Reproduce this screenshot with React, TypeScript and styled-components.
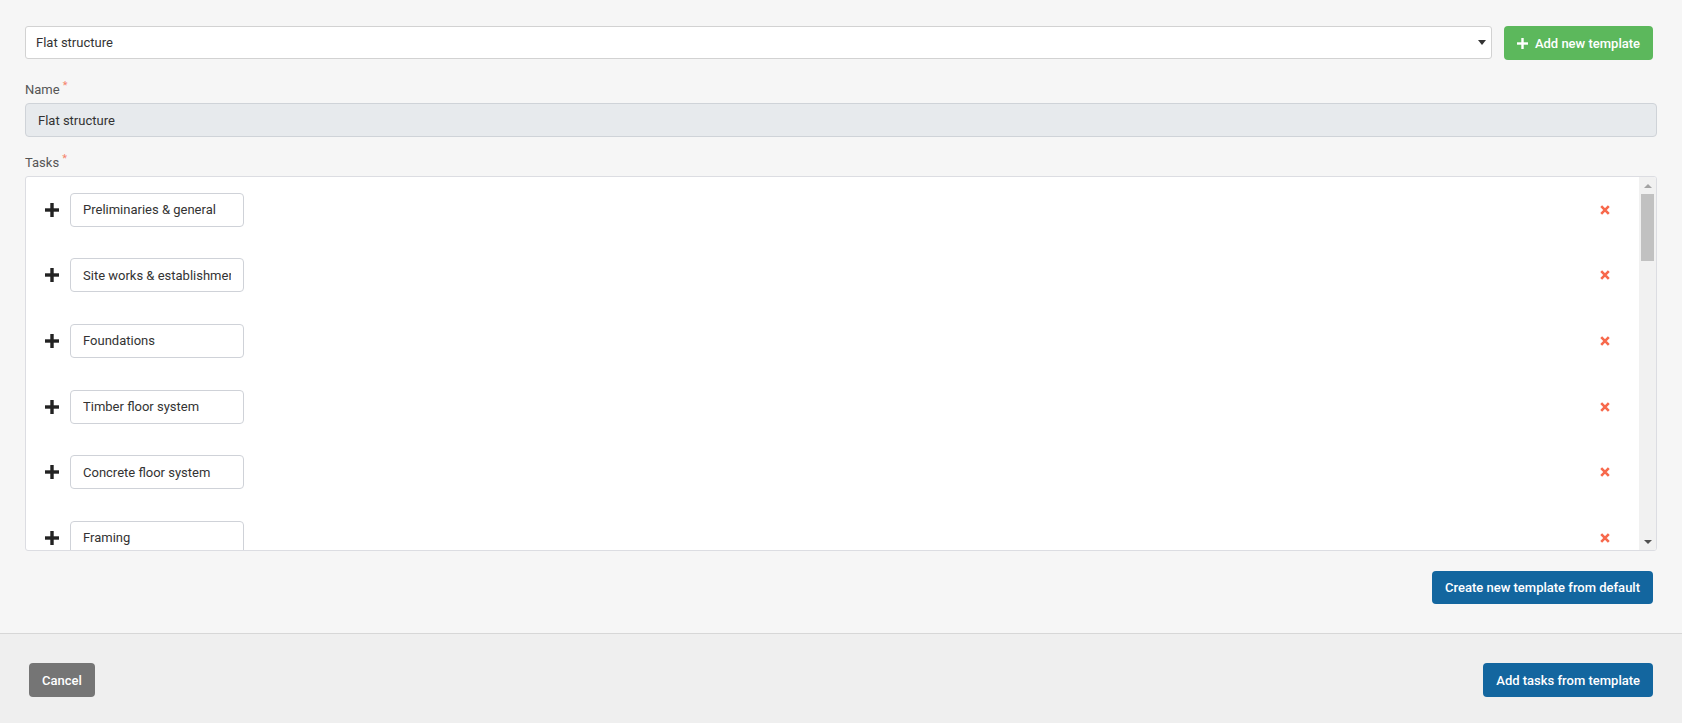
import React from "react";
import styled, { createGlobalStyle } from "styled-components";

const GlobalStyle = createGlobalStyle`
  html, body {
    margin: 0;
    padding: 0;
    background: #f6f6f6;
  }
  body {
    font-family: Roboto, "Liberation Sans", Arial, sans-serif;
    font-size: 13px;
    color: #333;
  }
  * { box-sizing: border-box; }
`;

const Page = styled.div`
  display: flex;
  flex-direction: column;
  height: 723px;
  background: #f6f6f6;
`;

const Main = styled.main`
  flex: 1;
  display: flex;
  flex-direction: column;
  padding: 26px 25px 29px;
`;

const TemplateRow = styled.div`
  display: flex;
  align-items: flex-start;
  gap: 12px;
  padding-right: 4px;
`;

const SelectWrap = styled.div`
  position: relative;
  flex: 1;
`;

const Select = styled.select`
  appearance: none;
  -webkit-appearance: none;
  display: block;
  width: 100%;
  height: 33px;
  padding: 0 30px 0 10px;
  border: 1px solid #d2d2d2;
  border-radius: 3px;
  background: #fff;
  font: inherit;
  color: #333;
  outline: none;
`;

const Caret = styled.svg`
  position: absolute;
  right: 6px;
  top: 14px;
  pointer-events: none;
`;

const Button = styled.button<{ $variant: "green" | "blue" | "grey"; $h?: number }>`
  display: inline-flex;
  align-items: center;
  gap: 7px;
  height: ${(p) => p.$h ?? 34}px;
  padding: 0 13px;
  border: none;
  border-radius: 4px;
  font-family: Roboto, "Liberation Sans", Arial, sans-serif;
  font-size: 13px;
  font-weight: 500;
  color: #fff;
  white-space: nowrap;
  cursor: pointer;
  background: ${(p) =>
    p.$variant === "green" ? "#5cb85c" : p.$variant === "blue" ? "#13669f" : "#757575"};
`;

const Label = styled.label<{ $gap: number }>`
  display: block;
  margin-top: ${(p) => p.$gap}px;
  margin-bottom: 6px;
  line-height: 15px;
  color: #555;
`;

const Required = styled.span`
  display: inline-block;
  margin-left: 3px;
  vertical-align: top;
  font-size: 11px;
  line-height: 1;
  color: #f5846c;
  margin-top: -2px;
`;

const NameInput = styled.input`
  display: block;
  width: 100%;
  height: 34px;
  padding: 0 12px;
  border: 1px solid #cfd3d8;
  border-radius: 4px;
  background: #e7eaed;
  font: inherit;
  color: #333;
  outline: none;
`;

const TaskBox = styled.div`
  display: flex;
  height: 375px;
  border: 1px solid #dcdde2;
  border-radius: 3px;
  background: #fff;
  overflow: hidden;
`;

const TaskList = styled.div`
  flex: 1;
  min-width: 0;
  overflow: hidden;
`;

const ScrollTrack = styled.div`
  flex: none;
  width: 17px;
  display: flex;
  flex-direction: column;
  background: #f1f1f1;
`;

const ScrollArrow = styled.div`
  flex: none;
  height: 17px;
  display: flex;
  align-items: center;
  justify-content: center;
`;

const ScrollThumb = styled.div<{ $size: number }>`
  flex: none;
  height: ${(p) => p.$size}px;
  margin: 0 2px;
  background: #c1c1c1;
`;

const ScrollRest = styled.div`
  flex: 1;
`;

const TaskRow = styled.div`
  display: flex;
  align-items: center;
  height: 65.6px;
  padding: 0 29px 0 19px;
`;

const AddIcon = styled.svg`
  flex: none;
  margin-right: 11px;
`;

const TaskInput = styled.input`
  width: 174px;
  height: 34px;
  padding: 0 12px;
  border: 1px solid #cfd2d8;
  border-radius: 4px;
  background: #fff;
  font: inherit;
  color: #333;
  outline: none;
`;

const Spacer = styled.div`
  flex: 1;
`;

const RemoveIcon = styled.svg`
  flex: none;
  cursor: pointer;
`;

const ActionRow = styled.div`
  display: flex;
  justify-content: flex-end;
  margin-top: 20px;
  padding-right: 4px;
`;

const Footer = styled.footer`
  display: flex;
  justify-content: space-between;
  align-items: flex-start;
  padding: 29px 29px 26px;
  border-top: 1px solid #d7d7d7;
  background: #efefef;
`;

const tasks = [
  "Preliminaries & general",
  "Site works & establishment",
  "Foundations",
  "Timber floor system",
  "Concrete floor system",
  "Framing",
  "Roofing",
  "Windows & exterior doors",
  "Exterior cladding",
  "Plumbing rough-in",
  "Electrical rough-in",
  "Insulation",
  "Linings",
  "Interior doors & trim",
  "Kitchen",
  "Bathroom",
  "Tiling",
  "Painting",
  "Floor coverings",
  "Plumbing fit-off",
  "Electrical fit-off",
  "Decking",
  "Retaining walls",
  "Driveway & paths",
  "Landscaping",
  "Fencing",
  "Cleaning",
  "Final inspection",
  "Handover",
];

const PlusGlyph = ({ size, thickness, color }: { size: number; thickness: number; color: string }) => (
  <>
    <rect x={(size - thickness) / 2} y={0} width={thickness} height={size} fill={color} />
    <rect x={0} y={(size - thickness) / 2} width={size} height={thickness} fill={color} />
  </>
);

export default function App() {
  return (
    <Page>
      <GlobalStyle />
      <Main>
        <TemplateRow>
          <SelectWrap>
            <Select defaultValue="flat">
              <option value="flat">Flat structure</option>
              <option value="default">Default</option>
            </Select>
            <Caret width="8" height="5" viewBox="0 0 8 5">
              <polygon points="0,0 8,0 4,5" fill="#333" />
            </Caret>
          </SelectWrap>
          <Button $variant="green">
            <svg width="11" height="11" viewBox="0 0 11 11">
              <PlusGlyph size={11} thickness={2.4} color="#fff" />
            </svg>
            Add new template
          </Button>
        </TemplateRow>

        <Label $gap={22}>
          Name<Required>*</Required>
        </Label>
        <NameInput readOnly defaultValue="Flat structure" />

        <Label $gap={18}>
          Tasks<Required>*</Required>
        </Label>
        <TaskBox>
          <TaskList>
            {tasks.map((t) => (
              <TaskRow key={t}>
                <AddIcon width="14" height="14" viewBox="0 0 14 14">
                  <PlusGlyph size={14} thickness={3.4} color="#222" />
                </AddIcon>
                <TaskInput defaultValue={t} />
                <Spacer />
                <RemoveIcon width="10" height="10" viewBox="0 0 10 10">
                  <path d="M1.2 1.2 L8.8 8.8 M8.8 1.2 L1.2 8.8" stroke="#f7694c" strokeWidth="2.6" strokeLinecap="butt" />
                </RemoveIcon>
              </TaskRow>
            ))}
          </TaskList>
          <ScrollTrack>
            <ScrollArrow>
              <svg width="8" height="4" viewBox="0 0 8 4">
                <polygon points="0,4 8,4 4,0" fill="#a3a3a3" />
              </svg>
            </ScrollArrow>
            <ScrollThumb $size={67} />
            <ScrollRest />
            <ScrollArrow>
              <svg width="8" height="4" viewBox="0 0 8 4">
                <polygon points="0,0 8,0 4,4" fill="#505050" />
              </svg>
            </ScrollArrow>
          </ScrollTrack>
        </TaskBox>

        <ActionRow>
          <Button $variant="blue" $h={33}>Create new template from default</Button>
        </ActionRow>
      </Main>
      <Footer>
        <Button $variant="grey">Cancel</Button>
        <Button $variant="blue">Add tasks from template</Button>
      </Footer>
    </Page>
  );
}
